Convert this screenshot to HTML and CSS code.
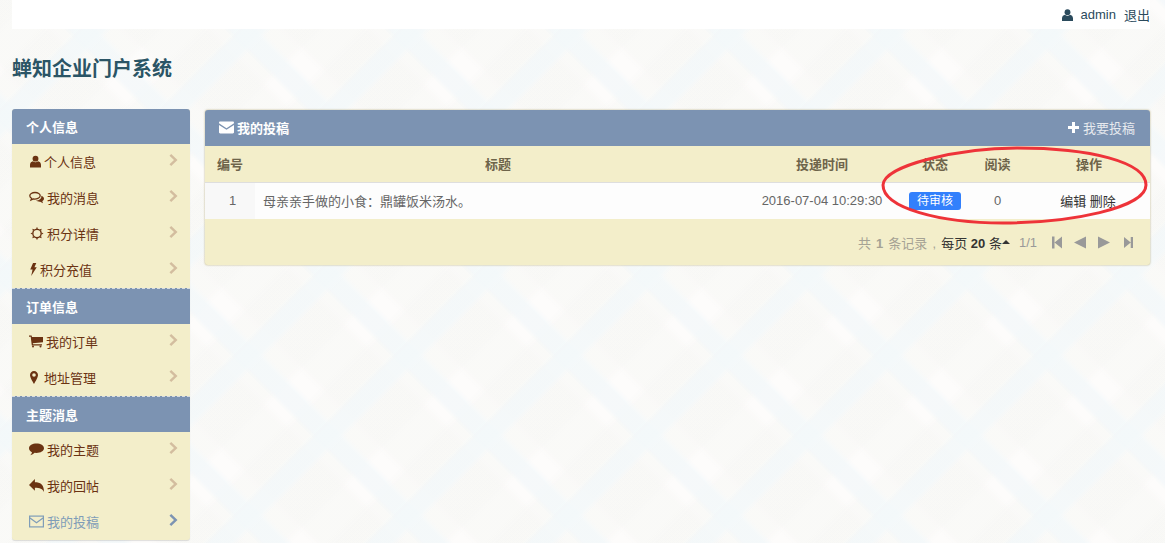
FILE: index.html
```html
<!DOCTYPE html>
<html lang="zh-CN">
<head>
    <meta charset="UTF-8">
    <title>蝉知企业门户系统</title>
    <link rel="stylesheet" href="styles.css">
</head>
<body>

    <!-- Icons -->
    <svg class="icon-defs" width="0" height="0">
        <symbol id="i-user" viewBox="0 0 12 13"><circle cx="6" cy="3.4" r="3.2"/><path d="M0 13V10C0 7.8 1.6 6.6 3.2 6.2 4 7 5 7.4 6 7.4S8 7 8.800 6.200C10.400 6.600 12 7.800 12 10V13Z"/></symbol>
        <symbol id="i-comments" viewBox="0 0 15 12"><path fill="none" stroke="currentColor" stroke-width="1.300" d="M6 1C3 1 .8 2.400.8 4.300 .8 5.400 1.500 6.300 2.600 6.900L2 8.600 4.300 7.500C7.500 8 11.200 6.600 11.200 4.300 11.200 2.400 9 1 6 1Z"/><path d="M12.200 4.200C14 4.900 15 6 15 7.200 15 8.200 14.300 9 13.300 9.600L14 11.800 11.200 10.200C9.500 10.300 8 9.900 7 9.100 10 9 13 7.200 12.200 4.200Z"/></symbol>
        <symbol id="i-sun" viewBox="0 0 14 14"><circle cx="7" cy="7" r="4.500" fill="none" stroke="currentColor" stroke-width="1.500"/><path d="M7 0 8.200 2H5.800ZM7 14 5.800 12H8.200ZM0 7 2 5.800V8.200ZM14 7 12 8.200V5.800ZM2 2 4.300 2.600 2.600 4.300ZM12 2 11.400 4.300 9.700 2.600ZM2 12 2.600 9.700 4.300 11.400ZM12 12 9.700 11.400 11.400 9.700Z"/></symbol>
        <symbol id="i-bolt" viewBox="0 0 7 14"><path d="M3 0H6.500L4.500 4.500H7L1 14 2.500 7H0Z"/></symbol>
        <symbol id="i-cart" viewBox="0 0 14 12"><path d="M0 0H2.600L3 1.500H14V6.800L3.800 7.800 4 8.700H13V10H2.800L1.700 1.300H0Z"/><circle cx="4" cy="11" r="1"/><circle cx="11.500" cy="11" r="1"/></symbol>
        <symbol id="i-marker" viewBox="0 0 8 13"><path fill-rule="evenodd" d="M4 0C6.200 0 8 1.800 8 4 8 6.200 5.500 10.500 4 13 2.500 10.500 0 6.200 0 4 0 1.800 1.800 0 4 0ZM4 2.200A1.800 1.800 0 1 0 4 5.800 1.800 1.800 0 1 0 4 2.200Z"/></symbol>
        <symbol id="i-comment" viewBox="0 0 15 12"><path d="M7.500 0C11.600 0 15 2.100 15 4.700 15 7.300 11.600 9.400 7.500 9.400L5.600 9.300C4.500 10.400 3 11.400 1.300 11.800 2.200 10.800 2.800 9.800 3 8.700 1.200 7.800 0 6.300 0 4.700 0 2.100 3.400 0 7.500 0Z"/></symbol>
        <symbol id="i-reply" viewBox="0 0 14 12"><path d="M5.500 0V3C10.500 3 14 5 14 12 12.800 9 10 8 5.500 8V11L0 5.500Z"/></symbol>
        <symbol id="i-mail-o" viewBox="0 0 15 12"><rect x=".6" y=".6" width="13.800" height="10.800" fill="none" stroke="currentColor" stroke-width="1.200"/><path fill="none" stroke="currentColor" stroke-width="1.200" d="M1 2.500 7.500 7.300 14 2.500"/></symbol>
        <symbol id="i-mail" viewBox="0 0 15 12"><path d="M0 1.200C0 .5.500 0 1.200 0H13.800C14.500 0 15 .5 15 1.200V1.800L7.500 6.800 0 1.800ZM0 3.400 7.500 8.300 15 3.400V10.800C15 11.500 14.500 12 13.800 12H1.200C.5 12 0 11.500 0 10.800Z"/></symbol>
        <symbol id="i-plus" viewBox="0 0 11 11"><path d="M4 0H7V4H11V7H7V11H4V7H0V4H4Z"/></symbol>
        <symbol id="i-chevron" viewBox="0 0 9 12"><path d="M2.200 0 8.500 6 2.200 12 .5 10.200 5 6 .5 1.800Z"/></symbol>
        <symbol id="i-first" viewBox="0 0 10 12"><path d="M0 0H2.500V12H0ZM10 0V12L2.500 6Z"/></symbol>
        <symbol id="i-prev" viewBox="0 0 12 12"><path d="M12 0V12L0 6Z"/></symbol>
        <symbol id="i-next" viewBox="0 0 12 12"><path d="M0 0V12L12 6Z"/></symbol>
        <symbol id="i-last" viewBox="0 0 10 12"><path d="M0 0V12L7.500 6ZM7.500 0H10V12H7.500Z"/></symbol>
    </svg>

    <!-- Top bar -->
    <div class="topbar">
        <svg class="icon user-top"><use href="#i-user"/></svg>
        <a href="#">admin</a>
        <a href="#">退出</a>
    </div>

    <h1 class="site-title">蝉知企业门户系统</h1>

    <div class="layout">

        <!-- Sidebar -->
        <div class="sidebar">
            <div class="side-head first">个人信息</div>
            <a class="side-item" href="#"><svg class="icon w11"><use href="#i-user"/></svg>个人信息<svg class="chevron"><use href="#i-chevron"/></svg></a>
            <a class="side-item" href="#"><svg class="icon w15"><use href="#i-comments"/></svg>我的消息<svg class="chevron"><use href="#i-chevron"/></svg></a>
            <a class="side-item" href="#"><svg class="icon w14"><use href="#i-sun"/></svg>积分详情<svg class="chevron"><use href="#i-chevron"/></svg></a>
            <a class="side-item" href="#"><svg class="icon w7"><use href="#i-bolt"/></svg>积分充值<svg class="chevron"><use href="#i-chevron"/></svg></a>

            <div class="side-head">订单信息</div>
            <a class="side-item" href="#"><svg class="icon w14 tight"><use href="#i-cart"/></svg>我的订单<svg class="chevron"><use href="#i-chevron"/></svg></a>
            <a class="side-item" href="#"><svg class="icon w8"><use href="#i-marker"/></svg>地址管理<svg class="chevron"><use href="#i-chevron"/></svg></a>

            <div class="side-head">主题消息</div>
            <a class="side-item" href="#"><svg class="icon w15"><use href="#i-comment"/></svg>我的主题<svg class="chevron"><use href="#i-chevron"/></svg></a>
            <a class="side-item" href="#"><svg class="icon w15"><use href="#i-reply"/></svg>我的回帖<svg class="chevron"><use href="#i-chevron"/></svg></a>
            <a class="side-item active" href="#"><svg class="icon w15"><use href="#i-mail-o"/></svg>我的投稿<svg class="chevron"><use href="#i-chevron"/></svg></a>
        </div>

        <!-- Main panel -->
        <div class="panel">
            <div class="panel-head">
                <span class="panel-title"><svg class="icon mail"><use href="#i-mail"/></svg>我的投稿</span>
                <a class="panel-action" href="#"><svg class="icon plus"><use href="#i-plus"/></svg>我要投稿</a>
            </div>
            <table class="list">
                <thead>
                    <tr>
                        <th class="col-id">编号</th>
                        <th>标题</th>
                        <th class="col-time">投递时间</th>
                        <th class="col-status">状态</th>
                        <th class="col-views">阅读</th>
                        <th class="col-actions">操作</th>
                    </tr>
                </thead>
                <tbody>
                    <tr>
                        <td class="cell-id">1</td>
                        <td class="cell-title">母亲亲手做的小食：鼎罐饭米汤水。</td>
                        <td>2016-07-04 10:29:30</td>
                        <td><span class="badge">待审核</span></td>
                        <td>0</td>
                        <td class="cell-actions"><a href="#">编辑</a> <a href="#">删除</a></td>
                    </tr>
                </tbody>
            </table>
            <div class="pager">
                <span class="pager-total">共 <b>1</b> 条记录 , </span>
                <span class="pager-size">每页 <b>20</b> 条</span><span class="caret"></span>
                <span class="pager-page">1/1</span>
                <svg class="page-icon first-icon"><use href="#i-first"/></svg>
                <svg class="page-icon"><use href="#i-prev"/></svg>
                <svg class="page-icon"><use href="#i-next"/></svg>
                <svg class="page-icon last-icon"><use href="#i-last"/></svg>
            </div>
        </div>
    </div>

    <!-- Hand drawn mark over the table -->
    <svg class="scribble" width="1165" height="543">
        <path d="M883 185C884 165 960 148 1017 148 1090 148 1146 162 1146 185 1146 208 1070 223 1003 223 940 223 883 208 883 185Z"/>
    </svg>

</body>
</html>
```

FILE: styles.css
```css
* {
    margin: 0;
    padding: 0;
    box-sizing: border-box;
    font-family: "Liberation Sans", "Noto Sans CJK SC", sans-serif;
}

html {
    height: 100%;
    overflow: hidden;
}

body {
    position: relative;
    height: 100%;
    padding: 0 15px 0 12px;
    font-size: 13px;
    color: #555;
    background-color: #fdfcfb;
    background-image:
        repeating-linear-gradient(135deg, transparent 0, transparent 74px, rgba(243, 248, 250, 0.8) 80px, rgba(243, 248, 250, 0.8) 94px, transparent 100px, transparent 113.137px),
        repeating-linear-gradient(45deg, transparent 0, transparent 24px, rgba(243, 248, 250, 0.8) 30px, rgba(243, 248, 250, 0.8) 44px, transparent 50px, transparent 113.137px),
        repeating-linear-gradient(135deg, rgba(247, 247, 245, 0.55) 0, rgba(247, 247, 245, 0.55) 16px, transparent 24px, transparent 48px, rgba(247, 247, 245, 0.55) 56px, rgba(247, 247, 245, 0.55) 113.137px),
        repeating-linear-gradient(45deg, rgba(247, 247, 245, 0.55) 0, rgba(247, 247, 245, 0.55) 10px, transparent 18px, transparent 62px, rgba(247, 247, 245, 0.55) 70px, rgba(247, 247, 245, 0.55) 113.137px);
    background-size: 160px 160px;
}

a {
    color: inherit;
    text-decoration: none;
}

.icon-defs {
    position: absolute;
}

.icon {
    flex: none;
    height: 13px;
    fill: currentColor;
}

.w7 { width: 7px; }
.w8 { width: 8px; margin-right: 3px; }
.w11 { width: 11px; }
.w14 { width: 14px; }
.w15 { width: 15px; margin-left: -1px; }
.tight { margin-left: -1px; }

/* Top bar */
.topbar {
    display: flex;
    align-items: center;
    justify-content: flex-end;
    gap: 8px;
    height: 29px;
    background: #fff;
    color: #2a4a5c;
}

.user-top {
    width: 11px;
    height: 12px;
}

.site-title {
    margin-top: 27px;
    height: 26px;
    line-height: 27px;
    font-size: 20px;
    font-weight: bold;
    color: #2b5566;
}

.layout {
    display: flex;
    align-items: flex-start;
    gap: 15px;
    margin-top: 27px;
}

/* Sidebar */
.sidebar {
    width: 178px;
    flex: none;
    background: #f3eeca;
    border-radius: 3px;
    box-shadow: 0 1px 1px rgba(0, 0, 0, 0.12);
}

.side-head {
    height: 36px;
    line-height: 37px;
    padding-left: 14px;
    background: #7c93b2;
    color: #fff;
    font-weight: bold;
    border-top: 1px dashed #d6dbe0;
}

.side-head.first {
    height: 35px;
    line-height: 37px;
    border-top: none;
    border-radius: 3px 3px 0 0;
}

.side-item {
    display: flex;
    align-items: center;
    gap: 3px;
    height: 36px;
    padding: 0 12px 2px 18px;
    color: #6b3312;
}

.side-item.active {
    color: #7f9db8;
}

.chevron {
    width: 9px;
    height: 12px;
    margin: 0 0 2px auto;
    fill: #d3bd9f;
}

.active .chevron {
    fill: #7c93b2;
}

/* Panel */
.panel {
    flex: 1;
    margin-top: 1px;
    background: #f3eeca;
    border-radius: 3px;
    box-shadow: 0 0 2px rgba(150, 130, 60, 0.7);
}

.panel-head {
    display: flex;
    align-items: center;
    justify-content: space-between;
    height: 36px;
    padding: 0 15px 2px 14px;
    background: #7c93b2;
    color: #fff;
    border-radius: 3px 3px 0 0;
}

.panel-title {
    display: flex;
    align-items: center;
    gap: 3px;
    font-weight: bold;
}

.mail {
    width: 15px;
}

.panel-action {
    display: flex;
    align-items: center;
    gap: 4px;
    color: #e6e9ee;
}

.plus {
    width: 11px;
    height: 11px;
    fill: #fff;
}

.list {
    width: 100%;
    border-collapse: collapse;
    table-layout: fixed;
    text-align: center;
}

.list th {
    height: 36px;
    color: #6e644a;
    font-weight: bold;
    border-bottom: 1px solid #dedede;
}

.col-id { width: 50px; }
.col-time { width: 162px; }
.col-status { width: 64px; }
.col-views { width: 61px; }
.col-actions { width: 122px; }

.list td {
    height: 37px;
    color: #666;
    background: #fdfdfd;
}

.list .cell-id {
    padding-left: 5px;
    background: #f8f8f8;
}

.list .cell-title {
    padding-left: 8px;
    text-align: left;
}

.list .cell-actions {
    padding-right: 2px;
    color: #333;
}

.badge {
    display: inline-block;
    padding: 0 7.500px;
    height: 18px;
    line-height: 18px;
    font-size: 12px;
    border-radius: 3px;
    background: #3280fc;
    color: #fff;
}

/* Pager */
.pager {
    display: flex;
    align-items: center;
    justify-content: flex-end;
    height: 46px;
    padding-right: 17px;
    color: #a5a294;
}

.pager-total {
    white-space: pre;
    word-spacing: 1.500px;
}

.pager-size {
    color: #333;
}

.caret {
    width: 0;
    height: 0;
    border: 4.500px solid transparent;
    border-top: none;
    border-bottom-color: #333;
}

.pager-page {
    margin: 0 15px 0 9px;
    color: #999;
}

.page-icon {
    width: 12px;
    height: 13px;
    margin-left: 12px;
    fill: #999;
}

.first-icon {
    width: 10px;
    margin-left: 0;
}

.last-icon {
    width: 9px;
    margin-left: 14px;
}

/* Red mark */
.scribble {
    position: absolute;
    top: 0;
    left: 0;
    pointer-events: none;
}

.scribble path {
    fill: none;
    stroke: #ee3339;
    stroke-width: 3;
}
```
